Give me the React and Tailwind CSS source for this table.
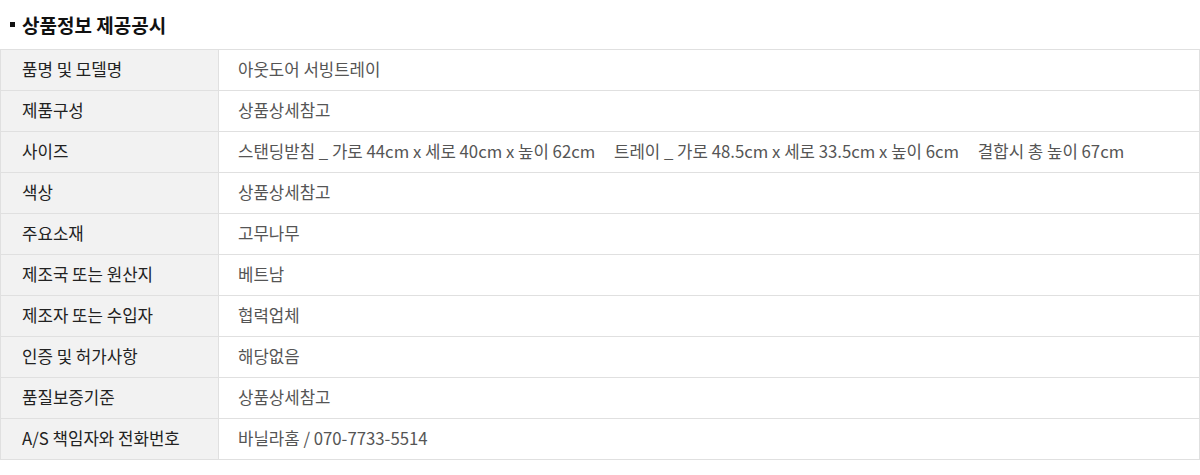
import React from "react";

const rows = [
  ["품명 및 모델명", "아웃도어 서빙트레이"],
  ["제품구성", "상품상세참고"],
  ["사이즈", "스탠딩받침 _ 가로 44cm x 세로 40cm x 높이 62cm\u00a0\u00a0\u00a0\u00a0\u00a0트레이 _ 가로 48.5cm x 세로 33.5cm x 높이 6cm\u00a0\u00a0\u00a0\u00a0\u00a0결합시 총 높이 67cm"],
  ["색상", "상품상세참고"],
  ["주요소재", "고무나무"],
  ["제조국 또는 원산지", "베트남"],
  ["제조자 또는 수입자", "협력업체"],
  ["인증 및 허가사항", "해당없음"],
  ["품질보증기준", "상품상세참고"],
  ["A/S 책임자와 전화번호", "바닐라홈 / 070-7733-5514"],
];

export default function App() {
  return (
    <div className="w-[1200px] h-[475px] bg-white" style={{ fontFamily: '"Noto Sans CJK KR", "Noto Sans", sans-serif' }}>
      <div className="h-[49px] flex items-center pl-[10px] pb-[1px]">
        <span className="w-[5px] h-[5px] bg-[#111] mr-[7px] mt-[1px]"></span>
        <h2 className="text-[19px] font-bold text-[#111] leading-none">상품정보 제공공시</h2>
      </div>
      <div className="border-t border-l border-r border-[#e0e0e0] w-[1200px]">
        {rows.map(([k, v]) => (
          <div key={k} className="flex h-[41px] border-b border-[#e0e0e0]">
            <div className="w-[218px] shrink-0 bg-[#f2f2f2] border-r border-[#e0e0e0] flex items-center pl-[21px] text-[16.8px] text-[#222]">{k}</div>
            <div className="flex-1 flex items-center pl-[19px] text-[16.75px] text-[#555] whitespace-nowrap">{v}</div>
          </div>
        ))}
      </div>
    </div>
  );
}
